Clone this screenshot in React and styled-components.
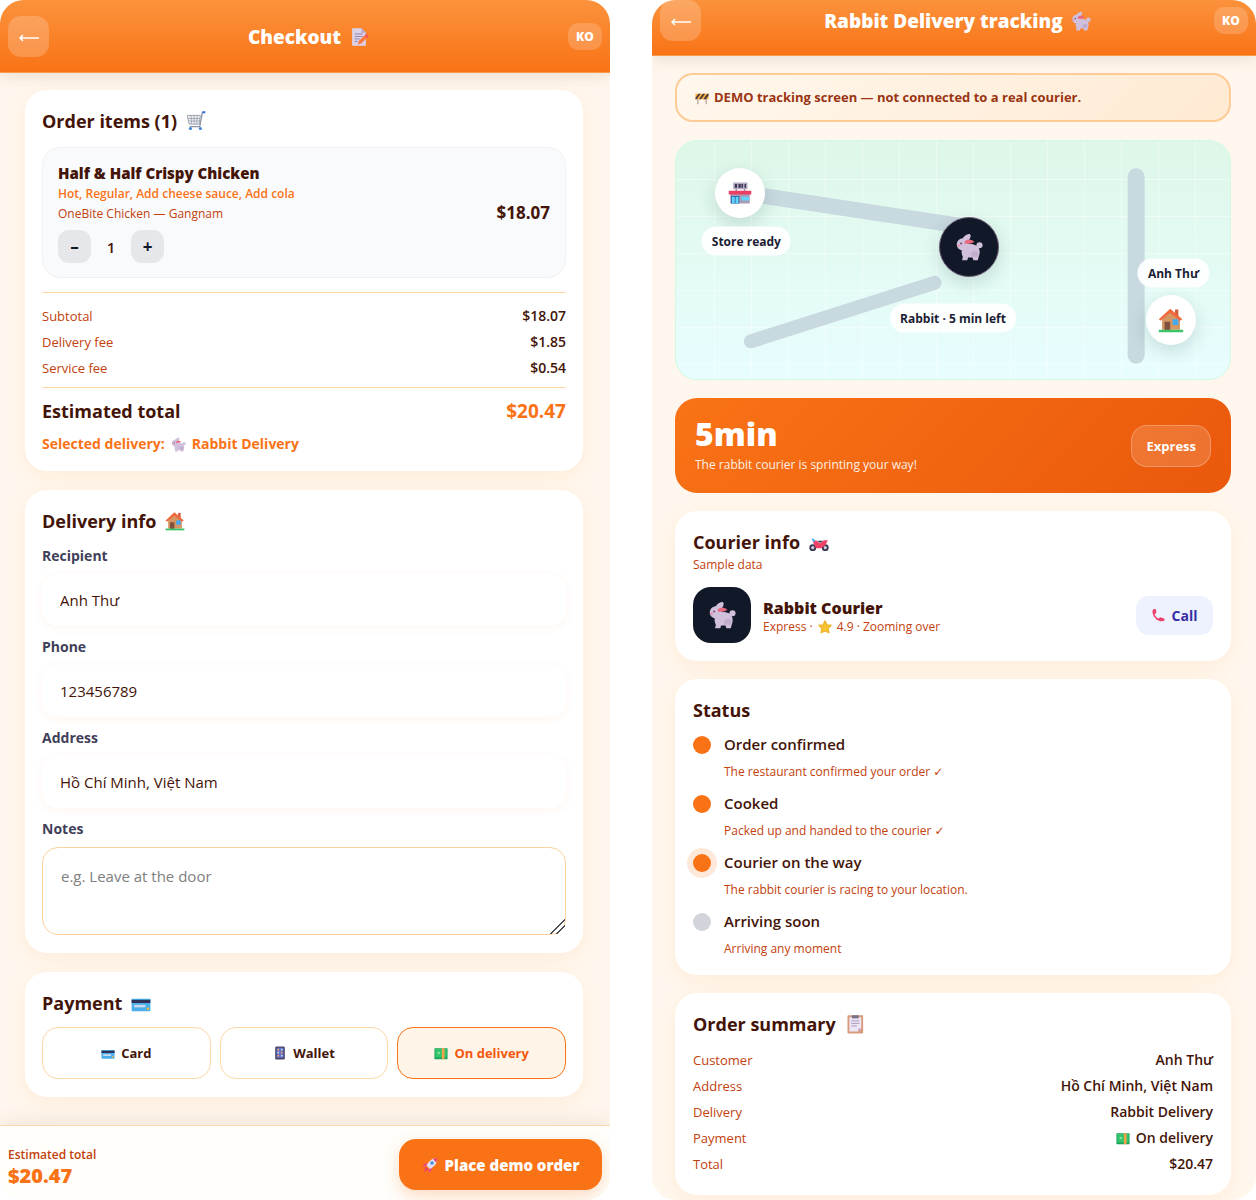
import React, { useState } from 'react';
import styled, { createGlobalStyle, css } from 'styled-components';

const GlobalStyle = createGlobalStyle`
  * {
    box-sizing: border-box;
  }

  body {
    margin: 0;
    background: #ffffff;
    color: #431407;
    font-family: 'Open Sans', 'Noto Sans', 'DejaVu Sans', sans-serif;
  }

  button,
  input,
  textarea {
    font-family: inherit;
    color: inherit;
  }

  h1,
  h2,
  h3,
  p,
  dl,
  dd,
  ol {
    margin: 0;
    padding: 0;
  }
`;

const Screens = styled.div`
  display: grid;
  grid-template-columns: 610fr 604fr;
  gap: 42px;
  min-height: 100vh;
`;

const Screen = styled.section`
  display: flex;
  flex-direction: column;
  border-radius: 24px;
  background: #fff7ed;
  overflow: hidden;
`;

const Header = styled.header`
  display: flex;
  align-items: center;
  justify-content: space-between;
  padding: ${(props) => (props.$scrolled ? '0 8px 14px' : '16px 8px 15px')};
  border-bottom: 1px solid #fb9a4b;
  background: linear-gradient(180deg, #fb923c, #f97316);
  box-shadow: 0 4px 14px rgba(67, 20, 7, 0.1);
  color: #ffffff;
`;

const BackButton = styled.button`
  display: flex;
  align-items: center;
  justify-content: center;
  width: 41px;
  height: 41px;
  padding: 0;
  border: none;
  border-radius: 13px;
  background: rgba(255, 255, 255, 0.2);
  cursor: pointer;
`;

const HeaderTitle = styled.h1`
  display: flex;
  align-items: center;
  gap: 8px;
  font-size: 19px;
  line-height: 26px;
  font-weight: 800;
`;

const LangButton = styled.button`
  width: 34px;
  height: 27px;
  padding: 0;
  border: none;
  border-radius: 10px;
  background: rgba(255, 255, 255, 0.18);
  color: #ffffff;
  font-size: 12px;
  font-weight: 800;
  cursor: pointer;
`;

const Content = styled.main`
  flex: 1;
  display: flex;
  flex-direction: column;
  gap: ${(props) => (props.$compact ? '18px' : '19px')};
  padding: ${(props) => (props.$compact ? '17px 25px 5px 23px' : '17px 27px 28px 25px')};
`;

const Card = styled.section`
  padding: 18px ${(props) => (props.$snug ? '17px' : '18px')};
  border-radius: 22px;
  background: #ffffff;
  box-shadow: 0 6px 22px rgba(249, 115, 22, 0.08);
`;

const CardTitle = styled.h2`
  display: flex;
  align-items: center;
  gap: 9px;
  margin-bottom: ${(props) => props.$space}px;
  font-size: 18px;
  line-height: 26px;
  font-weight: 700;
`;

const ItemBox = styled.div`
  display: flex;
  align-items: center;
  justify-content: space-between;
  padding: 14px 15px;
  border: 1px solid #f0f1f4;
  border-radius: 18px;
  background: #f9fafb;
`;

const ItemName = styled.h3`
  font-size: 15px;
  line-height: 22px;
  font-weight: 800;
`;

const ItemOptions = styled.p`
  color: #f97316;
  font-size: 12px;
  line-height: 20px;
  font-weight: 600;
`;

const ItemStore = styled.p`
  color: #c2410c;
  font-size: 12px;
  line-height: 20px;
`;

const Stepper = styled.div`
  display: flex;
  align-items: center;
  margin-top: 6px;
`;

const StepButton = styled.button`
  width: 33px;
  height: 33px;
  padding: 0;
  border: none;
  border-radius: 11px;
  background: #e5e7eb;
  color: #111827;
  font-size: 17px;
  font-weight: 700;
  cursor: pointer;
`;

const Quantity = styled.span`
  width: 40px;
  text-align: center;
  font-size: 15px;
  font-weight: 600;
`;

const ItemPrice = styled.strong`
  font-size: 17px;
  font-weight: 700;
`;

const Rows = styled.dl`
  ${(props) =>
    props.$divided &&
    css`
      margin-top: 14px;
      padding: 10px 0 6px;
      border-top: 1px solid #fed7aa;
      border-bottom: 1px solid #fed7aa;
    `}
`;

const Row = styled.div`
  display: flex;
  align-items: center;
  justify-content: space-between;
  font-size: 13px;
  line-height: 26px;

  dt {
    color: #c2410c;
  }

  dd {
    display: flex;
    align-items: center;
    gap: 6px;
    font-size: 14px;
    font-weight: 600;
  }
`;

const TotalRow = styled.div`
  display: flex;
  justify-content: space-between;
  margin-top: 10px;
  font-size: 18px;
  line-height: 26px;
  font-weight: 700;

  strong {
    color: #f97316;
    font-size: 19px;
    font-weight: 700;
  }
`;

const SelectedDelivery = styled.p`
  display: flex;
  align-items: center;
  gap: 6px;
  margin-top: 11px;
  color: #f97316;
  font-size: 14px;
  line-height: 18px;
  font-weight: 700;
`;

const Form = styled.div`
  display: flex;
  flex-direction: column;
  gap: 12px;
`;

const Field = styled.label`
  display: flex;
  flex-direction: column;
  gap: 9px;
  color: #3f3f5a;
  font-size: 14px;
  line-height: 18px;
  font-weight: 700;
`;

const TextInput = styled.input`
  width: 100%;
  height: 52px;
  padding: 0 18px;
  border: none;
  border-radius: 16px;
  background: #ffffff;
  box-shadow: 0 2px 10px rgba(249, 115, 22, 0.07);
  color: #431407;
  font-size: 15px;
  outline: none;
`;

const NotesInput = styled.textarea`
  display: block;
  width: 100%;
  height: 88px;
  padding: 17px 18px;
  border: 1px solid #fdd0a0;
  border-radius: 16px;
  background: #ffffff;
  color: #431407;
  font-size: 15px;
  line-height: 22px;
  resize: vertical;
  outline: none;

  &::placeholder {
    color: #808080;
  }

  &::-webkit-resizer {
    background: linear-gradient(
      135deg,
      transparent 0 48%,
      #4b4b58 48% 56%,
      transparent 56% 68%,
      #4b4b58 68% 76%,
      transparent 76%
    );
  }
`;

const PaymentOptions = styled.div`
  display: grid;
  grid-template-columns: repeat(3, 1fr);
  gap: 9px;
`;

const PaymentButton = styled.button`
  display: flex;
  align-items: center;
  justify-content: center;
  gap: 6px;
  height: 52px;
  padding: 0;
  border: 1px solid ${(props) => (props.$active ? '#f97316' : '#fed7aa')};
  border-radius: 16px;
  background: ${(props) => (props.$active ? '#fff4e8' : '#ffffff')};
  color: ${(props) => (props.$active ? '#f4580c' : '#431407')};
  font-size: 13px;
  font-weight: 700;
  cursor: pointer;
`;

const Footer = styled.footer`
  display: flex;
  align-items: center;
  justify-content: space-between;
  padding: 13px 8px 10px;
  border-top: 1px solid #fed7aa;
  background: #fffefb;
  box-shadow: 0 -4px 18px rgba(67, 20, 7, 0.08);
`;

const FooterSummary = styled.div`
  padding-top: 7px;
`;

const FooterLabel = styled.div`
  color: #c2410c;
  font-size: 12px;
  line-height: 16px;
  font-weight: 600;
`;

const FooterTotal = styled.div`
  color: #f97316;
  font-size: 20px;
  line-height: 26px;
  font-weight: 800;
`;

const OrderButton = styled.button`
  display: flex;
  align-items: center;
  justify-content: center;
  gap: 7px;
  width: 203px;
  height: 51px;
  padding: 0;
  border: none;
  border-radius: 17px;
  background: #f97316;
  box-shadow: 0 6px 16px rgba(249, 115, 22, 0.25);
  color: #ffffff;
  font-size: 15px;
  font-weight: 800;
  cursor: pointer;
`;

const Banner = styled.p`
  display: flex;
  align-items: center;
  gap: 5px;
  padding: 14px 18px;
  border: 2px solid #fdcb95;
  border-radius: 18px;
  background: linear-gradient(135deg, #fff7ed, #ffead3);
  color: #9a3412;
  font-size: 13px;
  line-height: 17px;
  font-weight: 700;
`;

const MapBox = styled.div`
  position: relative;
  height: 240px;
  border: 1px solid #d1fae5;
  border-radius: 22px;
  overflow: hidden;
  background:
    repeating-linear-gradient(90deg, transparent 0 36px, rgba(255, 255, 255, 0.42) 36px 37px) 2px 0,
    repeating-linear-gradient(180deg, transparent 0 36px, rgba(255, 255, 255, 0.42) 36px 37px) 0 2px,
    linear-gradient(180deg, #def7e8, #e8fdff);
`;

const Roads = styled.svg`
  position: absolute;
  inset: 0;
  width: 100%;
  height: 100%;
`;

const Pin = styled.div`
  position: absolute;
  display: flex;
  align-items: center;
  justify-content: center;
  left: ${(props) => props.$x}%;
  top: ${(props) => props.$y}%;
  width: ${(props) => (props.$dark ? 60 : 50)}px;
  height: ${(props) => (props.$dark ? 60 : 50)}px;
  border-radius: 50%;
  border: ${(props) => (props.$dark ? '1px solid #6b5b73' : 'none')};
  background: ${(props) => (props.$dark ? '#111827' : '#ffffff')};
  box-shadow: 0 6px 18px rgba(15, 60, 50, 0.16);
  transform: translate(-50%, -50%);
`;

const PinLabel = styled.span`
  position: absolute;
  left: ${(props) => props.$x}%;
  top: ${(props) => props.$y}%;
  padding: 6px 10px;
  border-radius: 15px;
  background: rgba(255, 255, 255, 0.92);
  color: #1c1c33;
  font-size: 12px;
  line-height: 17px;
  font-weight: 700;
  white-space: nowrap;
  transform: translate(-50%, -50%);
`;

const EtaCard = styled.section`
  display: flex;
  align-items: center;
  justify-content: space-between;
  padding: 18px 20px;
  border-radius: 22px;
  background: linear-gradient(135deg, #f97316, #ea580c);
  color: #ffffff;
`;

const EtaTime = styled.div`
  margin-bottom: 3px;
  font-size: 32px;
  line-height: 36px;
  font-weight: 800;
`;

const EtaText = styled.p`
  font-size: 12px;
  line-height: 20px;
  opacity: 0.9;
`;

const EtaBadge = styled.span`
  padding: 11px 14px;
  border: 1px solid rgba(255, 255, 255, 0.25);
  border-radius: 16px;
  background: rgba(255, 255, 255, 0.15);
  font-size: 13px;
  line-height: 18px;
  font-weight: 700;
`;

const Hint = styled.p`
  color: #c2410c;
  font-size: 12px;
  line-height: 20px;
`;

const CourierRow = styled.div`
  display: flex;
  align-items: center;
  gap: 12px;
  margin-top: 12px;
`;

const Avatar = styled.div`
  display: flex;
  align-items: center;
  justify-content: center;
  width: 58px;
  height: 56px;
  border-radius: 18px;
  background: #111827;
`;

const CourierText = styled.div`
  flex: 1;
  padding-top: 4px;
`;

const CourierName = styled.h3`
  font-size: 16px;
  line-height: 20px;
  font-weight: 800;
`;

const CourierMeta = styled.p`
  display: flex;
  align-items: center;
  gap: 5px;
  color: #c2410c;
  font-size: 12px;
  line-height: 18px;
`;

const CallButton = styled.button`
  display: flex;
  align-items: center;
  justify-content: center;
  gap: 6px;
  width: 77px;
  height: 39px;
  padding: 0;
  border: none;
  border-radius: 13px;
  background: #eef2ff;
  color: #3730a3;
  font-size: 14px;
  font-weight: 700;
  cursor: pointer;
`;

const Steps = styled.ol`
  display: flex;
  flex-direction: column;
  gap: 12px;
  list-style: none;
`;

const Step = styled.li`
  display: flex;
  gap: 13px;
`;

const Dot = styled.span`
  width: 18px;
  height: 18px;
  margin-top: 3px;
  border-radius: 50%;
  background: ${(props) => (props.$state === 'todo' ? '#d1d5db' : '#f97316')};
  box-shadow: ${(props) => (props.$state === 'now' ? '0 0 0 6px #fee8d9' : 'none')};
`;

const StepTitle = styled.h3`
  font-size: 15px;
  line-height: 22px;
  font-weight: 600;
`;

const StepText = styled.p`
  margin-top: 9px;
  color: #c2410c;
  font-size: 12px;
  line-height: 16px;
`;

const emojis = {
  memo: (
    <>
      <path d="M5 2h15l7 7v21H5z" fill="#dcd3ea" />
      <path d="M20 2v7h7z" fill="#b7a8cc" />
      <path d="M9 11h13M9 15h13M9 19h8M9 23h5" stroke="#9385a8" strokeWidth="1.6" />
      <path d="M14 28l2-6 9-9 4 4-9 9z" fill="#fb7a3c" />
      <path d="M25 13l2-2 4 4-2 2z" fill="#f0476f" />
    </>
  ),
  cart: (
    <>
      <path d="M2 7h21l-2 14H5z" fill="#eef0f4" stroke="#9ba0ac" strokeWidth="1.5" />
      <path d="M3 12h19M4 16h18M8 7l1 14M13 7v14M18 7l-1 14" stroke="#9ba0ac" strokeWidth="1.3" />
      <path d="M30 2l-4 1-4 22H6" fill="none" stroke="#8c93a3" strokeWidth="2" />
      <path d="M26 2h5" stroke="#3b72d9" strokeWidth="3" />
      <circle cx="7" cy="28" r="2.5" fill="#3f86d8" />
      <circle cx="23" cy="28" r="2.5" fill="#3f86d8" />
    </>
  ),
  rabbit: (
    <>
      <g fill="#d0c0dc">
        <path d="M8 8c1-4 5-7 9-7 2 2 0 6-2 8z" />
        <circle cx="9" cy="13" r="7" />
        <circle cx="28" cy="14" r="3.5" />
        <path d="M9 15c4-2 8-3 12-2 6 1 8 6 7 11l-2 7h-5l-1-3h-5l-1 3H8l1-4c-2-3-2-7 0-12z" />
      </g>
      <path d="M11 10c2-3 8-3 11 0-2 2-7 3-11 2z" fill="#e8697f" />
      <circle cx="7" cy="12" r="1.2" fill="#7b4b68" />
      <path d="M2 14l3-1v3z" fill="#f27b8d" />
      <path d="M18 25c0-4 4-6 7-4 2 2 2 4 1 6h-7z" fill="#c1aece" />
    </>
  ),
  house: (
    <>
      <path d="M21 3h4v8h-4z" fill="#d35e3b" />
      <path d="M5 14L15 5l12 9v14H5z" fill="#d59662" />
      <path d="M15 2L1 15l2 2 12-10 12 10 3-2z" fill="#f0683c" />
      <path d="M8 18h7v11H8z" fill="#82503f" />
      <path d="M18 15h7v7h-7z" fill="#46a9f2" />
      <path d="M1 28h30v3H1z" fill="#3fc368" />
    </>
  ),
  card: (
    <>
      <rect x="1" y="9" width="30" height="20" rx="1" fill="#49aee9" />
      <path d="M1 11h30v5H1z" fill="#2d3157" />
      <path d="M5 19h18v4H5z" fill="#cdd9ea" />
      <circle cx="27" cy="25" r="2" fill="#f8b13c" />
    </>
  ),
  phone: (
    <>
      <rect x="5" y="1" width="22" height="30" rx="3" fill="#4b4468" />
      <path d="M8 4h16v23H8z" fill="#5b6fc4" />
      <path d="M10 6h4v4h-4zM18 13h4v4h-4zM10 20h4v4h-4z" fill="#f59a62" />
      <path d="M18 6h4v4h-4zM10 13h4v4h-4zM18 20h4v4h-4z" fill="#c7d5f5" />
    </>
  ),
  cash: (
    <>
      <rect x="1" y="5" width="30" height="25" rx="1" fill="#16a35b" />
      <path d="M3 7h26v19H3z" fill="#35c46c" />
      <path d="M18 5h6v25h-6z" fill="#f5a04a" />
      <circle cx="11" cy="16" r="3" fill="#7fe39d" />
    </>
  ),
  rocket: (
    <>
      <path d="M12 11L4 14l-3 6 8-2zM21 20l-3 9-6 2 2-8z" fill="#ef4b7a" />
      <path d="M30 2c-9 0-16 5-21 15l7 7C26 19 31 11 30 2z" fill="#e4dff0" />
      <path d="M30 2c-3 0-6 1-8 2l6 7c2-3 2-6 2-9z" fill="#e9446c" />
      <circle cx="20" cy="12" r="3.5" fill="#3f8ee0" />
      <path d="M7 19l6 6-9 5z" fill="#e9446c" />
    </>
  ),
  barrier: (
    <>
      <path d="M5 15h3v15H5zM24 15h3v15h-3z" fill="#b9a8a0" />
      <path d="M1 6h30v13H1z" fill="#fbb040" />
      <path d="M1 16l7-10h5L4 19H1zM9 19l9-13h5l-9 13zM19 19l9-13h3v4l-6 9z" fill="#483a42" />
    </>
  ),
  store: (
    <>
      <path d="M7 2h19v9H7z" fill="#b4aabf" />
      <path d="M9 4h3v5H9zM14 4h3v5h-3zM18 4h2v5h-2zM22 4h2v5h-2z" fill="#3c3558" />
      <path d="M10 11h2v3h-2zM21 11h2v3h-2z" fill="#8f86a0" />
      <path d="M3 17h26v13H3z" fill="#a69db5" />
      <path d="M1 13h30v5H1z" fill="#ee3d63" />
      <path d="M4 20h11v10H4z" fill="#255aa0" />
      <path d="M5 21h4v9H5zM10 21h4v9h-4zM18 21h10v5H18z" fill="#63d2fb" />
    </>
  ),
  bike: (
    <>
      <circle cx="6" cy="25" r="4" fill="#d3cedd" stroke="#393650" strokeWidth="3" />
      <circle cx="26" cy="25" r="4" fill="#d3cedd" stroke="#393650" strokeWidth="3" />
      <path d="M6 15l5-2 7 5 6-5h6l-3 7-7 6h-9z" fill="#f04267" />
      <path d="M4 10l5 2 1 4-4-1z" fill="#45b1e8" />
      <path d="M13 14h10l-5 3z" fill="#363450" />
    </>
  ),
  star: (
    <path
      d="M16 2l4 9 10 1-7 7 2 10-9-4-9 4 2-10-7-7 10-1z"
      fill="#f7c331"
      stroke="#f0b52c"
      strokeLinejoin="round"
      strokeWidth="3"
    />
  ),
  call: (
    <path
      d="M4 2l5 1 1 8-4 3c2 5 5 8 9 10l4-3 9 3 1 4c-3 3-8 3-13 1C8 26 2 18 1 9c0-3 1-6 3-7z"
      fill="#ee426b"
    />
  ),
  clipboard: (
    <>
      <rect x="4" y="2" width="25" height="29" rx="1" fill="#d99b7d" />
      <path d="M7 5h19v18l-5 5H7z" fill="#eee6f5" />
      <path d="M21 28v-5h5z" fill="#b9a7cc" />
      <path d="M11 2h11v5H11z" fill="#7b7488" />
      <path d="M10 11h13M10 15h13M10 19h9" stroke="#a798b7" strokeWidth="1.5" />
    </>
  ),
};

function Emoji({ name, size = 18 }) {
  return (
    <svg width={size} height={size} viewBox="0 0 32 32" aria-hidden="true">
      {emojis[name]}
    </svg>
  );
}

function ScreenHeader({ title, emoji, scrolled }) {
  return (
    <Header $scrolled={scrolled}>
      <BackButton aria-label="Back">
        <svg width="20" height="10" viewBox="0 0 20 10" fill="none" stroke="#ffffff" strokeWidth="1.5">
          <path d="M20 6H1M4 3L1 6l3 3" />
        </svg>
      </BackButton>
      <HeaderTitle>
        {title}
        <Emoji name={emoji} size={20} />
      </HeaderTitle>
      <LangButton>KO</LangButton>
    </Header>
  );
}

const payments = [
  { id: 'card', label: 'Card', emoji: 'card' },
  { id: 'wallet', label: 'Wallet', emoji: 'phone' },
  { id: 'cash', label: 'On delivery', emoji: 'cash' },
];

const steps = [
  { title: 'Order confirmed', text: 'The restaurant confirmed your order ✓', state: 'done' },
  { title: 'Cooked', text: 'Packed up and handed to the courier ✓', state: 'done' },
  { title: 'Courier on the way', text: 'The rabbit courier is racing to your location.', state: 'now' },
  { title: 'Arriving soon', text: 'Arriving any moment', state: 'todo' },
];

function Checkout() {
  const [quantity, setQuantity] = useState(1);
  const [payment, setPayment] = useState('cash');
  const [form, setForm] = useState({
    recipient: 'Anh Thư',
    phone: '123456789',
    address: 'Hồ Chí Minh, Việt Nam',
    notes: '',
  });

  const handleChange = (e) => {
    setForm({ ...form, [e.target.name]: e.target.value });
  };

  return (
    <Screen>
      <ScreenHeader title="Checkout" emoji="memo" />
      <Content>
        <Card $snug>
          <CardTitle $space={13}>
            Order items ({quantity}) <Emoji name="cart" size={20} />
          </CardTitle>
          <ItemBox>
            <div>
              <ItemName>Half &amp; Half Crispy Chicken</ItemName>
              <ItemOptions>Hot, Regular, Add cheese sauce, Add cola</ItemOptions>
              <ItemStore>OneBite Chicken — Gangnam</ItemStore>
              <Stepper>
                <StepButton onClick={() => setQuantity(Math.max(1, quantity - 1))}>–</StepButton>
                <Quantity>{quantity}</Quantity>
                <StepButton onClick={() => setQuantity(quantity + 1)}>+</StepButton>
              </Stepper>
            </div>
            <ItemPrice>$18.07</ItemPrice>
          </ItemBox>
          <Rows $divided>
            <Row><dt>Subtotal</dt><dd>$18.07</dd></Row>
            <Row><dt>Delivery fee</dt><dd>$1.85</dd></Row>
            <Row><dt>Service fee</dt><dd>$0.54</dd></Row>
          </Rows>
          <TotalRow>
            <span>Estimated total</span>
            <strong>$20.47</strong>
          </TotalRow>
          <SelectedDelivery>
            Selected delivery: <Emoji name="rabbit" size={15} /> Rabbit Delivery
          </SelectedDelivery>
        </Card>

        <Card $snug>
          <CardTitle $space={13}>
            Delivery info <Emoji name="house" size={20} />
          </CardTitle>
          <Form>
            <Field>
              Recipient
              <TextInput name="recipient" value={form.recipient} onChange={handleChange} />
            </Field>
            <Field>
              Phone
              <TextInput name="phone" value={form.phone} onChange={handleChange} />
            </Field>
            <Field>
              Address
              <TextInput name="address" value={form.address} onChange={handleChange} />
            </Field>
            <Field>
              Notes
              <NotesInput
                name="notes"
                placeholder="e.g. Leave at the door"
                value={form.notes}
                onChange={handleChange}
              />
            </Field>
          </Form>
        </Card>

        <Card $snug>
          <CardTitle $space={11}>
            Payment <Emoji name="card" size={20} />
          </CardTitle>
          <PaymentOptions>
            {payments.map((option) => (
              <PaymentButton
                key={option.id}
                $active={payment === option.id}
                aria-pressed={payment === option.id}
                onClick={() => setPayment(option.id)}
              >
                <Emoji name={option.emoji} size={14} />
                {option.label}
              </PaymentButton>
            ))}
          </PaymentOptions>
        </Card>
      </Content>
      <Footer>
        <FooterSummary>
          <FooterLabel>Estimated total</FooterLabel>
          <FooterTotal>$20.47</FooterTotal>
        </FooterSummary>
        <OrderButton>
          <Emoji name="rocket" size={16} />
          Place demo order
        </OrderButton>
      </Footer>
    </Screen>
  );
}

function DeliveryMap() {
  return (
    <MapBox>
      <Roads viewBox="0 0 555 240" preserveAspectRatio="none">
        <g stroke="#c8d9df" strokeWidth="16" strokeLinecap="round">
          <path d="M65 52L295 87" />
          <path d="M75 202L259 143" strokeWidth="14" />
          <path d="M461 36V216" strokeWidth="17" />
        </g>
      </Roads>
      <Pin $x={11.6} $y={22}>
        <Emoji name="store" size={24} />
      </Pin>
      <PinLabel $x={12.7} $y={42}>Store ready</PinLabel>
      <Pin $x={52.9} $y={44.5} $dark>
        <Emoji name="rabbit" size={28} />
      </Pin>
      <PinLabel $x={50} $y={74.3}>Rabbit · 5 min left</PinLabel>
      <PinLabel $x={89.8} $y={55.6}>Anh Thư</PinLabel>
      <Pin $x={89.4} $y={75}>
        <Emoji name="house" size={26} />
      </Pin>
    </MapBox>
  );
}

function Tracking() {
  return (
    <Screen>
      <ScreenHeader title="Rabbit Delivery tracking" emoji="rabbit" scrolled />
      <Content $compact>
        <Banner>
          <Emoji name="barrier" size={14} />
          DEMO tracking screen — not connected to a real courier.
        </Banner>
        <DeliveryMap />
        <EtaCard>
          <div>
            <EtaTime>5min</EtaTime>
            <EtaText>The rabbit courier is sprinting your way!</EtaText>
          </div>
          <EtaBadge>Express</EtaBadge>
        </EtaCard>

        <Card>
          <CardTitle $space={0}>
            Courier info <Emoji name="bike" size={20} />
          </CardTitle>
          <Hint>Sample data</Hint>
          <CourierRow>
            <Avatar>
              <Emoji name="rabbit" size={28} />
            </Avatar>
            <CourierText>
              <CourierName>Rabbit Courier</CourierName>
              <CourierMeta>
                Express · <Emoji name="star" size={14} /> 4.9 · Zooming over
              </CourierMeta>
            </CourierText>
            <CallButton>
              <Emoji name="call" size={14} />
              Call
            </CallButton>
          </CourierRow>
        </Card>

        <Card>
          <CardTitle $space={10}>Status</CardTitle>
          <Steps>
            {steps.map((step) => (
              <Step key={step.title}>
                <Dot $state={step.state} />
                <div>
                  <StepTitle>{step.title}</StepTitle>
                  <StepText>{step.text}</StepText>
                </div>
              </Step>
            ))}
          </Steps>
        </Card>

        <Card>
          <CardTitle $space={10}>
            Order summary <Emoji name="clipboard" size={20} />
          </CardTitle>
          <Rows>
            <Row><dt>Customer</dt><dd>Anh Thư</dd></Row>
            <Row><dt>Address</dt><dd>Hồ Chí Minh, Việt Nam</dd></Row>
            <Row><dt>Delivery</dt><dd>Rabbit Delivery</dd></Row>
            <Row><dt>Payment</dt><dd><Emoji name="cash" size={14} /> On delivery</dd></Row>
            <Row><dt>Total</dt><dd>$20.47</dd></Row>
          </Rows>
        </Card>
      </Content>
    </Screen>
  );
}

function App() {
  return (
    <>
      <GlobalStyle />
      <Screens>
        <Checkout />
        <Tracking />
      </Screens>
    </>
  );
}

export default App;
